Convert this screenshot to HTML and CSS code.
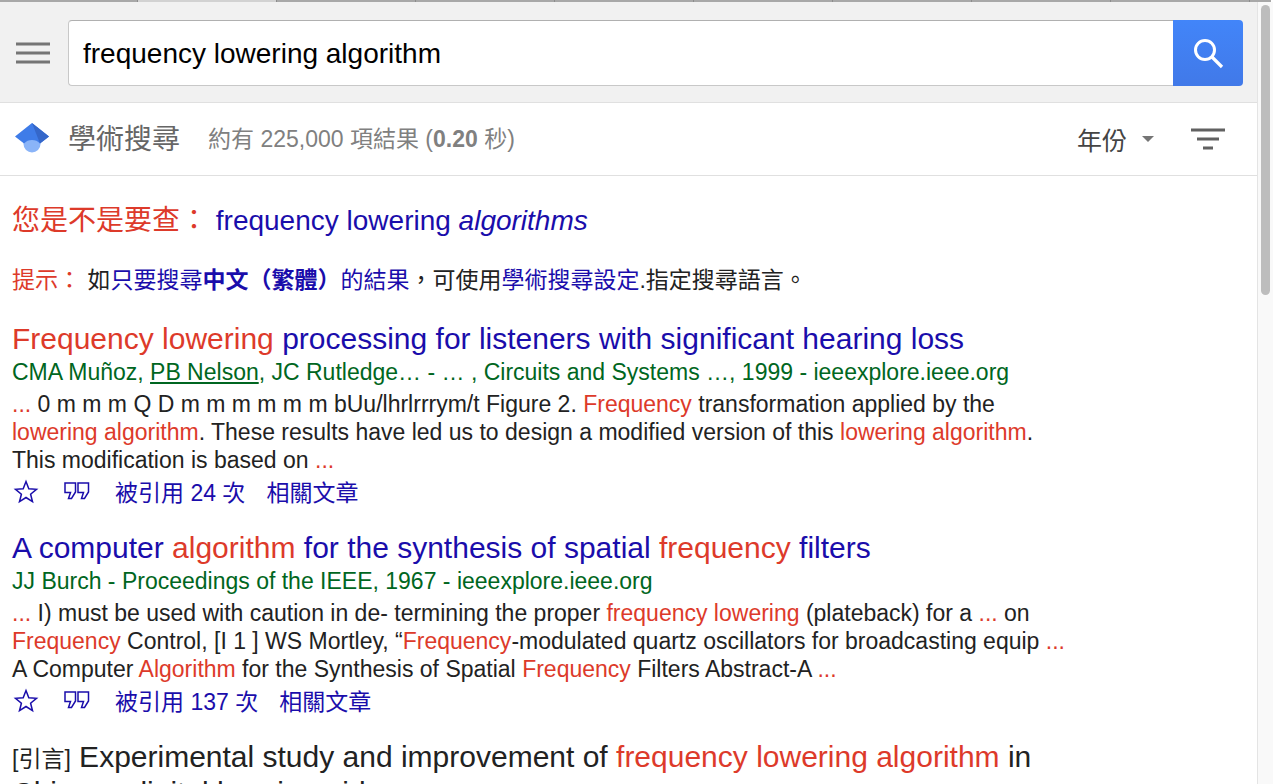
FILE: index.html
```html
<!DOCTYPE html>
<html lang="zh-Hant">
<head>
<meta charset="utf-8">
<title>frequency lowering algorithm</title>
<link rel="stylesheet" href="styles.css">
</head>
<body>
<div class="chrome-strip"><i class="tab"></i><i class="tab active"></i><i class="tab"></i><i class="tab"></i><i class="tab"></i><i class="tab"></i><i class="tab"></i><i class="tab"></i><i class="tab"></i><i class="tab last"></i></div>
<div class="shell">
  <div class="page">
    <header class="topbar">
      <svg class="menu" width="34" height="22" viewBox="0 0 34 22"><path d="M0 2h34M0 11h34M0 20h34" stroke="#757575" stroke-width="3" fill="none"/></svg>
      <div class="search">
        <div class="query">frequency lowering algorithm</div>
        <button class="search-btn" aria-label="search">
          <svg width="32" height="32" viewBox="0 0 32 32"><circle cx="13" cy="13" r="9.5" stroke="#fff" stroke-width="3" fill="none"/><path d="M20 20l10 10" stroke="#fff" stroke-width="3.2" fill="none"/></svg>
        </button>
      </div>
    </header>
    <div class="subbar">
      <svg class="logo" width="34" height="32" viewBox="0 0 34 32"><circle cx="17" cy="21" r="8.5" fill="#8ab4f8"/><path d="M17 0L34 13.500L25 20.500A11 11 0 0 0 9 20.500L0 13.500Z" fill="#3f7ce8"/><path d="M17 0L34 13.500L25 20.500Z" fill="#3567c9"/></svg>
      <span class="brand">學術搜尋</span>
      <span class="stats">約有 225,000 項結果 (<b>0.20</b> 秒)</span>
      <span class="year">年份</span>
      <i class="caret"></i>
      <svg class="filter" width="34" height="22" viewBox="0 0 34 22"><path d="M0 2h34M6 11h22M12 20h10" stroke="#616161" stroke-width="3" fill="none"/></svg>
    </div>
    <main class="results">
      <div class="didyou"><span class="red">您是不是要查：</span> <a class="blue">frequency lowering <em>algorithms</em></a></div>
      <div class="tip"><span class="red">提示：</span> 如<a class="blue">只要搜尋<b>中文（繁體）</b>的結果</a>，可使用<a class="blue">學術搜尋設定</a>.指定搜尋語言。</div>

      <article class="result">
        <h3 class="title"><a class="blue"><span class="red">Frequency lowering</span> processing for listeners with significant hearing loss</a></h3>
        <div class="meta">CMA Muñoz, <u>PB Nelson</u>, JC Rutledge… - … , Circuits and Systems …, 1999 - ieeexplore.ieee.org</div>
        <div class="snippet"><span class="red">...</span> 0 m m m Q D m m m m m m bUu/lhrlrrrym/t Figure 2. <span class="red">Frequency</span> transformation applied by the<br><span class="red">lowering algorithm</span>. These results have led us to design a modified version of this <span class="red">lowering algorithm</span>.<br>This modification is based on <span class="red">...</span></div>
        <div class="actions">
          <svg class="star" width="26" height="25" viewBox="0 0 26 25"><path d="M13 2.500L15.800 9.800L23.500 10.300L17.600 15.200L19.500 22.700L13 18.500L6.500 22.700L8.400 15.200L2.500 10.300L10.200 9.800Z" fill="none" stroke="#1a0dab" stroke-width="1.500"/></svg>
          <svg class="quote" width="26" height="18" viewBox="0 0 26 18"><path d="M1 1h10.500v9l-4 6.500h-3l2-6h-5.500zM14 1h10.500v9l-4 6.500h-3l2-6h-5.500z" fill="none" stroke="#1a0dab" stroke-width="1.500"/></svg>
          <a class="blue cited">被引用 24 次</a>
          <a class="blue">相關文章</a>
        </div>
      </article>

      <article class="result">
        <h3 class="title"><a class="blue">A computer <span class="red">algorithm</span> for the synthesis of spatial <span class="red">frequency</span> filters</a></h3>
        <div class="meta">JJ Burch - Proceedings of the IEEE, 1967 - ieeexplore.ieee.org</div>
        <div class="snippet"><span class="red">...</span> I) must be used with caution in de- termining the proper <span class="red">frequency lowering</span> (plateback) for a <span class="red">...</span> on<br><span class="red">Frequency</span> Control, [I 1 ] WS Mortley, “<span class="red">Frequency</span>-modulated quartz oscillators for broadcasting equip <span class="red">...</span><br>A Computer <span class="red">Algorithm</span> for the Synthesis of Spatial <span class="red">Frequency</span> Filters Abstract-A <span class="red">...</span></div>
        <div class="actions">
          <svg class="star" width="26" height="25" viewBox="0 0 26 25"><path d="M13 2.500L15.800 9.800L23.500 10.300L17.600 15.200L19.500 22.700L13 18.500L6.500 22.700L8.400 15.200L2.500 10.300L10.200 9.800Z" fill="none" stroke="#1a0dab" stroke-width="1.500"/></svg>
          <svg class="quote" width="26" height="18" viewBox="0 0 26 18"><path d="M1 1h10.500v9l-4 6.500h-3l2-6h-5.500zM14 1h10.500v9l-4 6.500h-3l2-6h-5.500z" fill="none" stroke="#1a0dab" stroke-width="1.500"/></svg>
          <a class="blue cited">被引用 137 次</a>
          <a class="blue">相關文章</a>
        </div>
      </article>

      <article class="result">
        <h3 class="title plain"><span class="tag">[引言]</span> Experimental study and improvement of <span class="red">frequency lowering algorithm</span> in Chinese digital hearing aids</h3>
      </article>
    </main>
  </div>
  <div class="scrollbar"><div class="thumb"></div></div>
</div>
</body>
</html>
```

FILE: styles.css
```css
html, body {
  margin: 0;
  height: 784px;
  overflow: hidden;
  background: #fff;
}
body {
  font-family: "Liberation Sans", "Noto Sans CJK TC", sans-serif;
  color: #222;
}
.chrome-strip {
  height: 2px;
  display: flex;
  overflow: hidden;
}
.tab {
  flex: 0 1 139px;
  box-sizing: border-box;
  background: #a8a8a8;
  border-right: 1px solid #8c8c8c;
}
.tab:first-child { flex-basis: 138px; }
.tab.active { background: #d2d2d2; }
.tab.last { flex-basis: 21px; border-right: 0; }
.shell {
  display: flex;
  height: 782px;
}
.page {
  width: 1257px;
  overflow: hidden;
}
.topbar {
  height: 101px;
  box-sizing: border-box;
  background: #f1f1f1;
  border-bottom: 1px solid #e0e0e0;
  display: flex;
  align-items: center;
  padding: 1px 14px 0 16px;
}
.menu { margin-right: 18px; flex: none; }
.search {
  flex: 1;
  height: 66px;
  display: flex;
  box-sizing: border-box;
}
.query {
  flex: 1;
  box-sizing: border-box;
  background: #fff;
  border: 1px solid #c8c8c8;
  border-top-color: #b0b0b0;
  border-right: 0;
  border-radius: 4px 0 0 4px;
  padding-left: 14px;
  font-size: 28px;
  line-height: 66px;
  color: #000;
}
.search-btn {
  width: 70px;
  border: 0;
  padding: 0;
  background: linear-gradient(#4285f9, #4179e8);
  border-radius: 0 4px 4px 0;
  display: flex;
  align-items: center;
  justify-content: center;
}
.subbar {
  height: 73px;
  box-sizing: border-box;
  border-bottom: 1px solid #e0e0e0;
  display: flex;
  align-items: center;
  padding: 0 32px 0 15px;
}
.logo { flex: none; margin-right: 19px; }
.brand {
  font-size: 28px;
  color: #666;
  margin-right: 28px;
  margin-bottom: 4px;
}
.stats {
  font-size: 23px;
  color: #808080;
  flex: 1;
  margin-bottom: 4px;
}
.year { font-size: 25px; color: #444; margin-right: 15px; }
.caret {
  width: 0;
  height: 0;
  border: 6px solid transparent;
  border-top: 6px solid #757575;
  border-bottom: 0;
  margin-right: 37px;
}
.results { padding: 27px 0 0 12px; width: 1060px; }
.red { color: #dd3a2a; }
.blue { color: #1a0dab; }
.didyou { font-size: 28px; line-height: 36px; }
.tip {
  font-size: 23px;
  line-height: 30px;
  margin-top: 26px;
  color: #222;
}
.result { margin-top: 23px; }
.tip + .result { margin-top: 27px; }
.title {
  margin: 0;
  font-size: 30px;
  font-weight: normal;
  line-height: 34px;
}
.title.plain { color: #222; }
.tag { font-size: 23px; }
.meta {
  font-size: 23px;
  line-height: 32px;
  margin-bottom: 2px;
  color: #006621;
}
.snippet {
  font-size: 23px;
  line-height: 28px;
  color: #222;
}
.actions {
  display: flex;
  align-items: center;
  height: 34px;
  font-size: 23px;
}
.star { margin-left: 1px; margin-right: 25px; }
.quote { margin-right: 25px; }
.cited { margin-right: 21px; }
.scrollbar {
  width: 16px;
  background: #f9f9f9;
  border-left: 1px solid #e4e4e4;
  box-sizing: border-box;
  padding: 3px 0 0 3px;
}
.thumb {
  width: 9px;
  height: 290px;
  background: #bdbdbd;
  border-radius: 5px;
}
```
